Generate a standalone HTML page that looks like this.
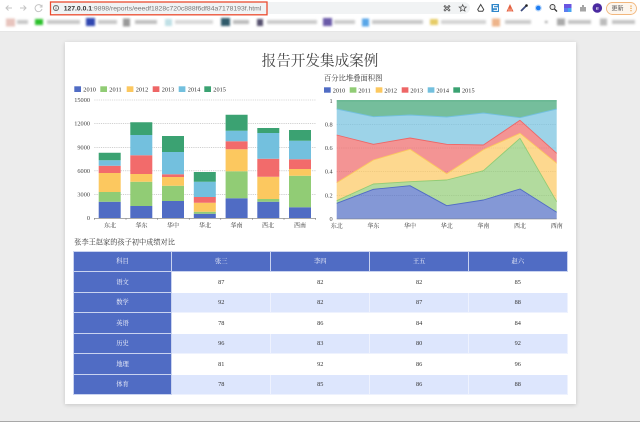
<!DOCTYPE html>
<html lang="zh"><head><meta charset="utf-8"><title>报告开发集成案例</title>
<style>
html,body{margin:0;padding:0;width:640px;height:422px;overflow:hidden;background:#ececec}
#wrap{position:absolute;left:0;top:0;width:640px;height:422px;filter:blur(.3px);font-family:"Liberation Serif","Noto Serif CJK SC",serif}
#chrome{position:absolute;left:0;top:0;width:640px;height:32px;background:#fff;border-bottom:1px solid #e6e6e6;box-sizing:border-box}
#card{position:absolute;left:65px;top:42px;width:511px;height:362px;background:#fff;box-shadow:0 1px 4px rgba(0,0,0,.16)}
#bot{position:absolute;left:0;top:421px;width:640px;height:1px;background:#a8a8a8}
svg{position:absolute;left:0;top:0}
table{position:absolute;left:72.7px;top:251px;width:494px;height:143.4px;border-collapse:collapse;table-layout:fixed;font-size:6.3px;line-height:7px;color:#333;text-align:center}
td,th{box-sizing:border-box;padding:0;font-weight:normal;border:1px solid #fff;height:20.480px}
th,td.h{background:#506cc4;color:#f6f7fd;border-color:#c9d3f0}
tbody tr:nth-child(even) td:not(.h){background:#dde6fd;border-color:#eef2fe}
tbody tr:nth-child(odd) td:not(.h){background:#fff}
.blur{filter:blur(1.100px)}
</style></head><body>
<div id="wrap">
<div id="chrome"></div>
<div id="card"></div>
<div id="bot"></div>
<table>
<colgroup><col style="width:98.6px"><col style="width:99px"><col style="width:99px"><col style="width:98.7px"><col style="width:98.7px"></colgroup>
<thead><tr><th>科目</th><th>张三</th><th>李四</th><th>王五</th><th>赵六</th></tr></thead>
<tbody>
<tr><td class="h">语文</td><td>87</td><td>82</td><td>82</td><td>85</td></tr>
<tr><td class="h">数学</td><td>92</td><td>82</td><td>87</td><td>88</td></tr>
<tr><td class="h">英语</td><td>78</td><td>86</td><td>84</td><td>84</td></tr>
<tr><td class="h">历史</td><td>96</td><td>83</td><td>80</td><td>92</td></tr>
<tr><td class="h">地理</td><td>81</td><td>92</td><td>86</td><td>96</td></tr>
<tr><td class="h">体育</td><td>78</td><td>85</td><td>86</td><td>88</td></tr>
</tbody></table>
<svg width="640" height="422" viewBox="0 0 640 422" xmlns="http://www.w3.org/2000/svg">
<!-- toolbar -->
<rect x="50" y="2" width="420" height="12" rx="6" fill="#f1f3f4"/>
<rect x="50.500" y="2" width="216.500" height="12.800" fill="none" stroke="#ea4b2f" stroke-width="1.300"/>
<g fill="none" stroke="#c4c4c4" stroke-width="1">
<path d="M12 8H6M8.500 5.500L6 8l2.500 2.500M20 8h6M23.500 5.500L26 8l-2.500 2.500"/>
<path d="M41.500 6.200A3.500 3.500 0 1 0 42 9M42 4.800v2.200h-2.200"/>
</g>
<circle cx="56" cy="8" r="2.600" fill="none" stroke="#555" stroke-width=".8"/>
<path d="M56 7.400v2.200M56 6v.8" stroke="#555" stroke-width=".7"/>
<text x="63.700" y="10.300" font-family="Liberation Sans,sans-serif" font-size="6.800" fill="#777"><tspan fill="#333" font-weight="bold">127.0.0.1</tspan>:9898/reports/eeedf1828c720c888f6df84a7178193f.html</text>
<path d="M445 5.500l2 2 2-2 1 1-2 1.500 2 2-1 1-2-2-2 2-1-1 2-2-2-1.500z" fill="none" stroke="#555" stroke-width=".8"/>
<path d="M462.700 4.600l1 2.300 2.500.2-1.900 1.600.6 2.400-2.200-1.300-2.200 1.300.6-2.400-1.900-1.600 2.500-.2z" fill="none" stroke="#555" stroke-width=".8"/>
<path d="M480.700 4.500l3 5-1 1.800h-4l-1-1.800z" fill="none" stroke="#444" stroke-width="1"/>
<rect x="491.500" y="4" width="7.500" height="8" fill="#2f86c9"/><path d="M497.500 5.600h-4v2.200h4v2.600h-4" fill="none" stroke="#fff" stroke-width="1"/>
<path d="M510 4l3.500 7.500h-7z" fill="#e2603f"/><rect x="508" y="8.500" width="4" height="3" fill="#f08a70"/>
<path d="M521 11l5-5" stroke="#3c4a7e" stroke-width="1.800"/><circle cx="526.500" cy="5.500" r="1.300" fill="#222"/>
<circle cx="538.300" cy="8" r="3.500" fill="#bcd9fb"/><circle cx="538.300" cy="8" r="2.300" fill="#1d7cf2"/>
<circle cx="552.500" cy="7" r="2.500" fill="#eee" stroke="#444" stroke-width="1"/><path d="M554.500 9l2.500 2.500" stroke="#333" stroke-width="1.300"/>
<rect x="564" y="4" width="7.500" height="8" fill="#6a55e0"/><rect x="567.700" y="8" width="3.800" height="4" fill="#48a5f0"/><rect x="564" y="8" width="3.700" height="4" fill="#5c7cf0"/>
<path d="M580 7h2V5h2v2h2v4.500h-6z" fill="#a6a6a6"/>
<circle cx="597.300" cy="8" r="4.800" fill="#4a2aa0"/><text x="597.300" y="10" font-family="Liberation Sans,sans-serif" font-size="5.500" text-anchor="middle" fill="#fff">e</text>
<rect x="606.500" y="2.500" width="30" height="12" rx="6" fill="#fdf6ee" stroke="#f2b77d" stroke-width=".9"/>
<text x="611.500" y="10.500" font-family="Liberation Sans,'Noto Sans CJK SC',sans-serif" font-size="6" fill="#555">更新</text>
<path d="M631 5.500v1.200M631 7.800v1.200M631 10.100v1.200" stroke="#ec9b3a" stroke-width="1.200"/>
<!-- bookmarks -->
<g class="blur">
<rect x="6" y="18.500" width="9" height="8" fill="#e8c4bd"/><rect x="17" y="20" width="11" height="4" fill="#c8c8c8"/>
<rect x="35" y="19" width="8" height="6" fill="#2bc02b"/><rect x="47" y="20" width="33" height="4" fill="#c8c8c8"/>
<rect x="86" y="18" width="9" height="8" fill="#2f46b0"/><rect x="98" y="20" width="19" height="4" fill="#c8c8c8"/>
<rect x="123" y="18.500" width="7" height="8" fill="#999"/><rect x="135" y="20" width="22" height="4" fill="#c0c0c0"/>
<rect x="165" y="19" width="7" height="7" fill="#bfe0e6"/><rect x="175" y="20" width="38" height="4" fill="#d8d8d8"/>
<rect x="221" y="18" width="9" height="8" fill="#2f5a6a"/><rect x="233" y="20" width="16" height="4" fill="#bbb"/>
<rect x="257" y="19" width="6" height="7" fill="#55506e"/><rect x="267" y="20" width="50" height="4" fill="#ccc"/>
<rect x="323" y="18" width="9" height="8" fill="#6a5aa8"/><rect x="334" y="20" width="21" height="4" fill="#ccc"/>
<rect x="362" y="18.500" width="7" height="8" fill="#58a6e8"/><rect x="372" y="20" width="51" height="4" fill="#c8c8c8"/>
<rect x="430" y="19" width="8" height="6" fill="#e6cc66"/><rect x="441" y="20" width="45" height="4" fill="#d4d4d4"/>
<rect x="492" y="18.500" width="8" height="8" fill="#eeb48a"/><rect x="505" y="20" width="26" height="4" fill="#ccc"/>
<rect x="545" y="21" width="2.500" height="2" fill="#999"/>
<rect x="557" y="18.500" width="8" height="7" fill="#aaa"/><rect x="568" y="20" width="23" height="4" fill="#c4c4c4"/>
<rect x="600" y="18.500" width="7" height="7" fill="#bbb"/><rect x="612" y="20" width="23" height="4" fill="#c4c4c4"/>
</g>
<!-- title -->
<text x="320" y="65.300" font-size="14.600" text-anchor="middle" fill="#444">报告开发集成案例</text>
<!-- left legend -->
<g font-size="6.300" fill="#333">
<rect x="74.300" y="86.300" width="6.700" height="5.700" fill="#506cc4"/><text x="83.300" y="91.500">2010</text>
<rect x="100.300" y="86.300" width="6.700" height="5.700" fill="#91cc75"/><text x="109.300" y="91.500">2011</text>
<rect x="126.700" y="86.300" width="6.700" height="5.700" fill="#fcc85f"/><text x="135.700" y="91.500">2012</text>
<rect x="152.700" y="86.300" width="6.700" height="5.700" fill="#ee6666"/><text x="161.700" y="91.500">2013</text>
<rect x="178.700" y="86.300" width="6.700" height="5.700" fill="#73c0de"/><text x="187.700" y="91.500">2014</text>
<rect x="204.300" y="86.300" width="6.700" height="5.700" fill="#3ba272"/><text x="213.300" y="91.500">2015</text>
</g>
<!-- left grid -->
<g stroke="#b5b5b5" stroke-width=".6" stroke-dasharray="1.200 1">
<path d="M94.300 100H315.700M94.300 123.700H315.700M94.300 147.300H315.700M94.300 170.800H315.700M94.300 194.400H315.700"/>
</g>
<g font-size="6.300" fill="#444" text-anchor="end">
<text x="90" y="102">15000</text><text x="90" y="125.700">12000</text><text x="90" y="149.300">9000</text><text x="90" y="172.800">6000</text><text x="90" y="196.400">3000</text><text x="90" y="220">0</text>
</g>
<!-- bars -->
<path fill="#506cc4" d="M98.700 218V201.700h22V218zM130.300 218V206h22V218zM162 218V201h22V218zM193.800 218V213.700h22V218zM225.600 218V198.300h22V218zM257.300 218V201.700h22V218zM289 218V207.300h22V218z"/>
<path fill="#91cc75" d="M98.700 201.700V192h22V201.700zM130.300 206V181.700h22V206zM162 201V185.700h22V201zM193.800 213.700V211.700h22V213.700zM225.600 198.300V171.300h22V198.300zM257.300 201.700V199h22V201.700zM289 207.300V175.700h22V207.300z"/>
<path fill="#fcc85f" d="M98.700 192V173h22V192zM130.300 181.700V174h22V181.700zM162 185.700V177h22V185.700zM193.800 211.700V202.700h22V211.700zM225.600 171.300V149.300h22V171.300zM257.300 199V176.700h22V199zM289 175.700V169h22V175.700z"/>
<path fill="#f26b6b" d="M98.700 173V165.700h22V173zM130.300 174V155.300h22V174zM162 177V174.300h22V177zM193.800 202.700V197h22V202.700zM225.600 149.300V141.300h22V149.300zM257.300 176.700V158.700h22V176.700zM289 169V159.300h22V169z"/>
<path fill="#73c0de" d="M98.700 165.700V160.300h22V165.700zM130.300 155.300V135h22V155.300zM162 174.300V152h22V174.300zM193.800 197V181.700h22V197zM225.600 141.300V130.700h22V141.300zM257.300 158.700V133h22V158.700zM289 159.300V140.700h22V159.300z"/>
<path fill="#3ba272" d="M98.700 160.300V152.700h22V160.300zM130.300 135V122.300h22V135zM162 152V136h22V152zM193.800 181.700V172h22V181.700zM225.600 130.700V114.700h22V130.700zM257.300 133V128h22V133zM289 140.700V130h22V140.700z"/>
<path d="M94.300 218.300H315.700" stroke="#777" stroke-width=".6"/>
<path d="M94.300 218v2M126 218v2M157.600 218v2M189.200 218v2M220.800 218v2M252.500 218v2M284 218v2M315.700 218v2" stroke="#777" stroke-width=".5"/>
<g font-size="6" fill="#333" text-anchor="middle">
<text x="110" y="227.500">东北</text><text x="141.500" y="227.500">华东</text><text x="173" y="227.500">华中</text><text x="205" y="227.500">华北</text><text x="236.500" y="227.500">华南</text><text x="268" y="227.500">西北</text><text x="300" y="227.500">西南</text>
</g>
<text x="74.300" y="244.300" font-size="7.200" fill="#333">张李王赵家的孩子初中成绩对比</text>
<!-- right chart -->
<text x="324" y="80.500" font-size="7.300" fill="#333">百分比堆叠面积图</text>
<g font-size="6.300" fill="#333">
<rect x="324" y="87.300" width="6.700" height="5.400" fill="#506cc4"/><text x="332.700" y="92.500">2010</text>
<rect x="349.700" y="87.300" width="6.700" height="5.400" fill="#91cc75"/><text x="358.400" y="92.500">2011</text>
<rect x="375.700" y="87.300" width="6.700" height="5.400" fill="#fcc85f"/><text x="384.400" y="92.500">2012</text>
<rect x="401.700" y="87.300" width="6.700" height="5.400" fill="#ee6666"/><text x="410.400" y="92.500">2013</text>
<rect x="427.700" y="87.300" width="6.700" height="5.400" fill="#73c0de"/><text x="436.400" y="92.500">2014</text>
<rect x="453.300" y="87.300" width="6.700" height="5.400" fill="#3ba272"/><text x="462" y="92.500">2015</text>
</g>
<g stroke="#b5b5b5" stroke-width=".6" stroke-dasharray="1.200 1">
<path d="M336.700 124.400H556.700M336.700 148H556.700M336.700 171.700H556.700M336.700 195.300H556.700"/>
</g>
<g stroke-width=".9" stroke-linejoin="round">
<polygon fill="#506cc4" fill-opacity=".7" stroke="none" points="336.700,203.300 373.400,189.300 410,185.700 446.700,205.700 483.400,200 520,189 556.700,212.300 556.700,219 336.700,219"/>
<polygon fill="#91cc75" fill-opacity=".7" stroke="none" points="336.700,200.700 373.400,184 410,181.700 446.700,180 483.400,170.700 520,138.300 556.700,201.700 556.700,212.300 520,189 483.400,200 446.700,205.700 410,185.700 373.400,189.300 336.700,203.300"/>
<polygon fill="#fcc85f" fill-opacity=".7" stroke="none" points="336.700,182.700 373.400,160 410,149.300 446.700,173.700 483.400,149.700 520,133.300 556.700,163.300 556.700,201.700 520,138.300 483.400,170.700 446.700,180 410,181.700 373.400,184 336.700,200.700"/>
<polygon fill="#ee6666" fill-opacity=".7" stroke="none" points="336.700,135 373.400,144.300 410,138 446.700,144.300 483.400,145 520,120.300 556.700,153.300 556.700,163.300 520,133.300 483.400,149.700 446.700,173.700 410,149.300 373.400,160 336.700,182.700"/>
<polygon fill="#73c0de" fill-opacity=".7" stroke="none" points="336.700,109 373.400,116.700 410,115 446.700,117 483.400,113 520,117.700 556.700,109 556.700,153.300 520,120.300 483.400,145 446.700,144.300 410,138 373.400,144.300 336.700,135"/>
<polygon fill="#3ba272" fill-opacity=".7" stroke="none" points="336.700,100.700 556.700,100.700 556.700,109 520,117.700 483.400,113 446.700,117 410,115 373.400,116.700 336.700,109"/>
<g fill="none">
<polyline stroke="#506cc4" points="336.700,203.300 373.400,189.300 410,185.700 446.700,205.700 483.400,200 520,189 556.700,212.300"/>
<polyline stroke="#91cc75" points="336.700,200.700 373.400,184 410,181.700 446.700,180 483.400,170.700 520,138.300 556.700,201.700"/>
<polyline stroke="#fcc85f" points="336.700,182.700 373.400,160 410,149.300 446.700,173.700 483.400,149.700 520,133.300 556.700,163.300"/>
<polyline stroke="#ee6666" points="336.700,135 373.400,144.300 410,138 446.700,144.300 483.400,145 520,120.300 556.700,153.300"/>
<polyline stroke="#73c0de" points="336.700,109 373.400,116.700 410,115 446.700,117 483.400,113 520,117.700 556.700,109"/>
<polyline stroke="#3ba272" points="336.700,100.700 556.700,100.700"/>
</g>
</g>
<path d="M336.700 219H556.700" stroke="#777" stroke-width=".6"/>
<g font-size="6.300" fill="#444" text-anchor="end">
<text x="332.700" y="103">1</text><text x="332.700" y="126.700">0.8</text><text x="332.700" y="150">0.6</text><text x="332.700" y="173.700">0.4</text><text x="332.700" y="197.300">0.2</text><text x="332.700" y="221">0</text>
</g>
<g font-size="6" fill="#333" text-anchor="middle">
<text x="336.700" y="228">东北</text><text x="373.400" y="228">华东</text><text x="410" y="228">华中</text><text x="446.700" y="228">华北</text><text x="483.400" y="228">华南</text><text x="520" y="228">西北</text><text x="556.700" y="228">西南</text>
</g>
</svg>
</div>
</body></html>
